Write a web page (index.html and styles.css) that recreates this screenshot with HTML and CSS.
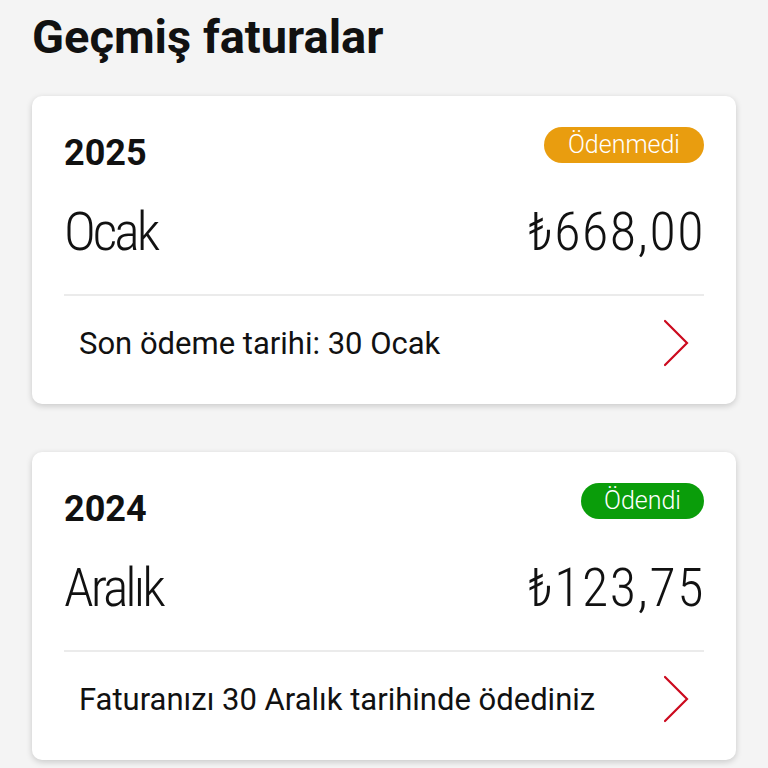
FILE: index.html
```html
<!DOCTYPE html>
<html lang="tr">
<head>
<meta charset="utf-8">
<link rel="stylesheet" href="styles.css">
</head>
<body>
<main class="page">
  <h1 class="title">Geçmiş faturalar</h1>

  <section class="card">
    <div class="card-head">
      <span class="year">2025</span>
      <span class="badge badge-unpaid">Ödenmedi</span>
    </div>
    <div class="card-amount">
      <span class="month">Ocak</span>
      <span class="amount">₺668,00</span>
    </div>
    <div class="card-foot">
      <span class="note">Son ödeme tarihi: 30 Ocak</span>
      <svg class="chev" viewBox="0 0 28 48" width="28" height="48" aria-hidden="true">
        <path d="M3 2 L25 24 L3 46" fill="none" stroke="#cc0a1e" stroke-width="2.2" stroke-linecap="round" stroke-linejoin="miter"/>
      </svg>
    </div>
  </section>

  <section class="card">
    <div class="card-head">
      <span class="year">2024</span>
      <span class="badge badge-paid">Ödendi</span>
    </div>
    <div class="card-amount">
      <span class="month">Aralık</span>
      <span class="amount">₺123,75</span>
    </div>
    <div class="card-foot">
      <span class="note">Faturanızı 30 Aralık tarihinde ödediniz</span>
      <svg class="chev" viewBox="0 0 28 48" width="28" height="48" aria-hidden="true">
        <path d="M3 2 L25 24 L3 46" fill="none" stroke="#cc0a1e" stroke-width="2.2" stroke-linecap="round" stroke-linejoin="miter"/>
      </svg>
    </div>
  </section>
</main>
</body>
</html>
```

FILE: styles.css
```css
html, body {
  margin: 0;
  padding: 0;
  background: #f4f4f4;
}
body {
  font-family: Roboto, "Liberation Sans", sans-serif;
  color: #111;
  width: 768px;
  height: 768px;
  overflow: hidden;
}
.page {
  padding: 10px 32px 0 32px;
}
.title {
  margin: 0;
  font-size: 47px;
  font-weight: 700;
  line-height: 54px;
  color: #111;
  height: 86px;
}
.card {
  background: #fff;
  border-radius: 10px;
  box-shadow: 0 2px 6px rgba(0,0,0,0.18);
  padding: 0 32px;
  height: 308px;
  margin-bottom: 48px;
  box-sizing: border-box;
}
.card:last-child {
  margin-bottom: 0;
}
.card-head {
  display: flex;
  justify-content: space-between;
  align-items: flex-start;
  padding-top: 31px;
  height: 78px;
  box-sizing: border-box;
}
.year {
  font-size: 36px;
  font-weight: 700;
  line-height: 36px;
  margin-top: 8px;
}
.badge {
  color: #fff;
  font-weight: 300;
  font-size: 25px;
  line-height: 36px;
  height: 36px;
  padding: 0 24px;
  border-radius: 18px;
}
.badge-unpaid { background: #e99d0f; }
.badge-paid { background: #0a9d0a; padding: 0 23px; }
.card-amount {
  display: flex;
  justify-content: space-between;
  align-items: baseline;
  height: 122px;
  border-bottom: 2px solid #ebebeb;
  box-sizing: border-box;
  padding-top: 28px;
}
.month, .amount {
  font-size: 54px;
  font-weight: 300;
  line-height: 60px;
  font-stretch: condensed;
}
.month {
  letter-spacing: -3px;
}
.amount {
  letter-spacing: 1.5px;
  margin-right: -1px;
}
.card-foot {
  display: flex;
  justify-content: space-between;
  align-items: center;
  padding: 0 14px 0 15px;
  height: 94px;
}
.note {
  font-size: 31px;
  font-weight: 400;
}
.chev {
  display: block;
}
```
